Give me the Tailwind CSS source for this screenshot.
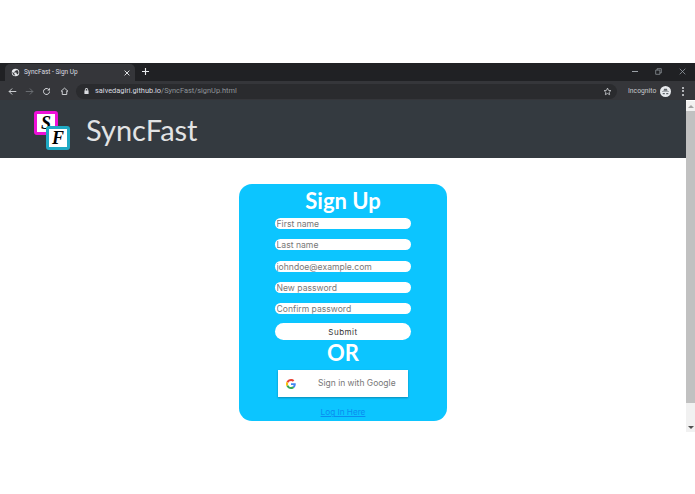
<!DOCTYPE html>
<html lang="en">
<head>
    <meta charset="UTF-8">
    <title>SyncFast - Sign Up</title>
    <script src="https://cdn.jsdelivr.net/npm/@tailwindcss/browser@4"></script>
</head>
<body class="bg-white w-[695px] h-[494px] overflow-hidden font-['Roboto',sans-serif]">
    <div class="h-[63px]"></div>

    <!-- Browser tab strip -->
    <div class="h-[18px] bg-[#202124] flex items-end pl-[5px] text-[#e8eaed]">
        <div class="w-[130px] h-[17px] bg-[#35363a] rounded-t-[5px] flex items-center pl-[6px] pr-[5px] gap-[4px]">
            <svg class="w-[9px] h-[9px]" viewBox="0 0 24 24" fill="#e8eaed"><path d="M12 2a10 10 0 1 0 0 20 10 10 0 0 0 0-20zm-1 17.900A8 8 0 0 1 4.200 10L9 15v1a2 2 0 0 0 2 2v1.900zm6.900-2.500A2 2 0 0 0 16 16h-1v-3a1 1 0 0 0-1-1H8v-2h2a1 1 0 0 0 1-1V7h2a2 2 0 0 0 2-2v-.4a8 8 0 0 1 2.900 12.800z"/></svg>
            <span class="text-[6.500px] flex-1 text-[#dadce0]">SyncFast - Sign Up</span>
            <svg class="w-[6px] h-[6px]" viewBox="0 0 10 10" stroke="#e8eaed" stroke-width="1.600"><path d="M1 1l8 8M9 1l-8 8"/></svg>
        </div>
        <svg class="w-[7px] h-[7px] ml-[7px] mb-[6px]" viewBox="0 0 10 10" stroke="#e8eaed" stroke-width="1.600"><path d="M5 0v10M0 5h10"/></svg>
        <div class="flex-1"></div>
        <div class="flex items-center gap-[17px] pr-[9px] mb-[6px]">
            <div class="w-[6px] h-px bg-[#9aa0a6]"></div>
            <svg class="w-[7px] h-[7px]" viewBox="0 0 10 10" fill="none" stroke="#9aa0a6"><path d="M1 3h6v6H1zM3 3V1h6v6H7"/></svg>
            <svg class="w-[7px] h-[7px]" viewBox="0 0 10 10" stroke="#9aa0a6" stroke-width="1.100"><path d="M1 1l8 8M9 1l-8 8"/></svg>
        </div>
    </div>

    <!-- Browser toolbar -->
    <div class="h-[19px] pt-px bg-[#35363a] flex items-center pl-[8px]">
        <svg class="w-[9px] h-[9px]" viewBox="0 0 24 24" fill="none" stroke="#dadce0" stroke-width="2.400"><path d="M22 12H3M11 4l-8 8 8 8"/></svg>
        <svg class="w-[9px] h-[9px] ml-[8px]" viewBox="0 0 24 24" fill="none" stroke="#6f7377" stroke-width="2.400"><path d="M2 12h19M13 4l8 8-8 8"/></svg>
        <svg class="w-[9px] h-[9px] ml-[8px]" viewBox="0 0 24 24" fill="none" stroke="#dadce0" stroke-width="2.600"><path d="M20 12a8 8 0 1 1-2.500-5.800"/><path d="M21 2v7h-7" fill="#dadce0" stroke="none"/></svg>
        <svg class="w-[9px] h-[9px] ml-[9px]" viewBox="0 0 24 24" fill="none" stroke="#dadce0" stroke-width="2.400"><path d="M12 3l9 8h-3v9H6v-9H3z"/></svg>
        <div class="w-[541px] h-[15px] ml-[7px] bg-[#2a2b2e] rounded-full flex items-center pl-[8px] pr-[5px] text-[7.400px] leading-none">
            <svg class="w-[5px] h-[6px]" viewBox="0 0 12 14" fill="#dadce0"><path d="M2 6V4a4 4 0 0 1 8 0v2h1v8H1V6zm2 0h4V4a2 2 0 0 0-4 0z"/></svg>
            <span class="ml-[6px] text-[#dadce0]">saivedagiri.github.io</span><span class="text-[#8f9499]">/SyncFast/signUp.html</span>
            <svg class="w-[9px] h-[9px] ml-auto" viewBox="0 0 24 24" fill="none" stroke="#dadce0" stroke-width="2"><path d="M12 3l2.800 6 6.200.7-4.600 4.300 1.200 6.500L12 17.200 6.400 20.500l1.200-6.500L3 9.700 9.200 9z"/></svg>
        </div>
        <span class="ml-[11px] text-[6.800px] text-[#c8cacd]">Incognito</span>
        <div class="w-[11px] h-[11px] ml-[4px] rounded-full bg-[#e8eaed] flex items-center justify-center">
            <svg class="w-[7px] h-[7px]" viewBox="0 0 10 10" fill="#5f6368"><path d="M3 1h4l1 3H2zM0 4.500h10v1H0zM1 7h3v2H1zM6 7h3v2H6z"/></svg>
        </div>
        <div class="ml-[11px] flex flex-col gap-[1.500px]">
            <div class="w-[2px] h-[2px] rounded-full bg-[#dadce0]"></div>
            <div class="w-[2px] h-[2px] rounded-full bg-[#dadce0]"></div>
            <div class="w-[2px] h-[2px] rounded-full bg-[#dadce0]"></div>
        </div>
    </div>

    <div class="flex h-[332px]">
        <main class="w-[686px]">
            <!-- Site header -->
            <header class="h-[58px] bg-[#343a40] flex items-center pl-[34px]">
                <div class="relative w-[36px] h-[39px] mt-[2px]">
                    <div class="absolute left-0 top-0 w-[24px] h-[24px] bg-white border-[3px] border-[#ee10d8] rounded-[3px] flex items-center justify-center font-['Liberation_Serif',serif] italic font-bold text-[18px] leading-none text-black">S</div>
                    <div class="absolute left-[12px] top-[15px] w-[24px] h-[24px] bg-white border-[3px] border-[#1fa9c4] rounded-[3px] flex items-center justify-center font-['Liberation_Serif',serif] italic font-bold text-[18px] leading-none text-black">F</div>
                </div>
                <span class="ml-[16px] font-['Lato',sans-serif] text-[29px] leading-none text-[#e2e3e4]">SyncFast</span>
            </header>

            <!-- Sign up card -->
            <form class="w-[208px] h-[237px] mt-[26px] ml-[239px] bg-[#0cc5ff] rounded-[13px] flex flex-col items-center font-['Inter',sans-serif]">
                <h1 class="h-[34px] pt-[3px] font-['Lato',sans-serif] font-bold text-[22px] leading-[28px] text-white">Sign Up</h1>
                <div class="flex flex-col gap-[10.300px]">
                    <input type="text" placeholder="First name" class="w-[136px] h-[11px] pt-[2px] rounded-full bg-white px-[1.500px] text-[8.600px] outline-none placeholder:text-[#777]">
                    <input type="text" placeholder="Last name" class="w-[136px] h-[11px] pt-[2px] rounded-full bg-white px-[1.500px] text-[8.600px] outline-none placeholder:text-[#777]">
                    <input type="email" placeholder="johndoe@example.com" class="w-[136px] h-[11px] pt-[2px] rounded-full bg-white px-[1.500px] text-[8.600px] outline-none placeholder:text-[#777]">
                    <input type="password" placeholder="New password" class="w-[136px] h-[11px] pt-[2px] rounded-full bg-white px-[1.500px] text-[8.600px] outline-none placeholder:text-[#777]">
                    <input type="password" placeholder="Confirm password" class="w-[136px] h-[11px] pt-[2px] rounded-full bg-white px-[1.500px] text-[8.600px] outline-none placeholder:text-[#777]">
                </div>
                <button type="button" class="w-[136px] h-[17px] mt-[9px] rounded-full bg-white text-[8px] tracking-[0.500px] text-[#333]">Submit</button>
                <div class="h-[25px] font-['Lato',sans-serif] font-bold text-[22px] leading-[25px] text-white">OR</div>
                <button type="button" class="w-[130px] h-[27px] mt-[5px] bg-white flex items-center pl-[8px] shadow-[0_1px_2px_rgba(0,0,0,0.3)]">
                    <svg class="w-[10px] h-[10px]" viewBox="0 0 48 48">
                        <path fill="#EA4335" d="M24 9.500c3.500 0 6.700 1.200 9.200 3.600l6.900-6.900C35.900 2.400 30.500 0 24 0 14.600 0 6.500 5.400 2.600 13.200l8 6.200C12.400 13.700 17.700 9.500 24 9.500z"/>
                        <path fill="#4285F4" d="M46.900 24.500c0-1.600-.1-3.100-.4-4.500H24v9h12.900c-.6 3-2.200 5.500-4.700 7.200l7.700 6c4.500-4.200 7-10.300 7-17.700z"/>
                        <path fill="#FBBC05" d="M10.500 28.600c-.5-1.400-.8-3-.8-4.600s.3-3.200.8-4.600l-8-6.200C.9 16.500 0 20.100 0 24s.9 7.500 2.600 10.800l7.900-6.200z"/>
                        <path fill="#34A853" d="M24 48c6.500 0 11.900-2.100 15.900-5.800l-7.700-6c-2.200 1.400-4.900 2.300-8.200 2.300-6.300 0-11.600-4.200-13.500-9.900l-8 6.200C6.500 42.600 14.600 48 24 48z"/>
                    </svg>
                    <span class="ml-[22px] text-[8.500px] text-[#777]">Sign in with Google</span>
                </button>
                <a href="#" class="mt-[10px] text-[8.200px] leading-[11px] underline text-[#0a8cf0]">Log In Here</a>
            </form>
        </main>

        <!-- Page scrollbar -->
        <div class="w-[9px] bg-[#f1f1f1] flex flex-col items-center mt-px">
            <div class="h-[10px] flex items-center"><div class="w-0 h-0 border-x-[3px] border-x-transparent border-b-[3px] border-b-[#a3a3a3]"></div></div>
            <div class="w-full h-[292px] bg-[#c1c1c1]"></div>
            <div class="mt-auto h-[10px] flex items-center"><div class="w-0 h-0 border-x-[3px] border-x-transparent border-t-[3px] border-t-[#505050]"></div></div>
        </div>
    </div>
</body>
</html>
